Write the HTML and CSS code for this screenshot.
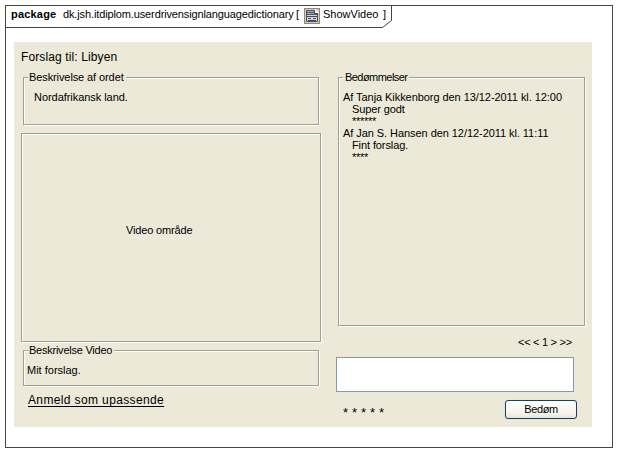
FILE: index.html
```html
<!DOCTYPE html>
<html lang="da">
<head>
<meta charset="utf-8">
<title>ShowVideo</title>
<link rel="stylesheet" href="styles.css">
</head>
<body>
<main class="frame">
  <header class="tab">
    <svg class="tab-edge" width="387" height="23" viewBox="0 0 387 23" aria-hidden="true"><path d="M0 21.500H377.500L386.500 14.500V0" fill="none" stroke="#444"/></svg>
    <b class="package">package</b>
    <span class="path">dk.jsh.itdiplom.userdrivensignlanguagedictionary</span>
    <span class="bracket">[</span>
    <svg class="icon" width="16" height="16" viewBox="0 0 16 16" aria-hidden="true">
      <rect x=".5" y=".5" width="15" height="15" fill="#d5cdc5" stroke="#91857d"/>
      <path d="M2 2H11L14 5V14H2Z" fill="#4d535e"/>
      <path d="M11 1V5H15Z" fill="#fff"/>
      <path d="M3 3.500H10M3 5.500H10" stroke="#a9afb9"/>
      <path d="M3 7H13V13H3Z" fill="#d3d6dc"/>
      <path d="M3 8.500H13M4 10.500H7M9 10.500H12M4 12.500H12" stroke="#454950"/>
    </svg>
    <span class="name">ShowVideo</span>
    <span class="bracket">]</span>
  </header>
  <section class="panel">
    <h1 class="title">Forslag til: Libyen</h1>
    <div class="columns">
      <div class="left">
        <section class="group word"><h2 class="legend">Beskrivelse af ordet</h2><p class="word-text">Nordafrikansk land.</p></section>
        <section class="group video"><span class="video-text">Video område</span></section>
        <section class="group about"><h2 class="legend about-legend">Beskrivelse Video</h2><p class="about-text">Mit forslag.</p></section>
        <a class="report">Anmeld som upassende</a>
      </div>
      <div class="right">
        <section class="group reviews">
          <h2 class="legend reviews-legend">Bedømmelser</h2>
          <article class="review"><p class="author">Af Tanja Kikkenborg den 13/12-2011 kl. 12:00</p><p class="comment">Super godt</p><p class="comment stars">******</p></article>
          <article class="review"><p class="author">Af Jan S. Hansen den 12/12-2011 kl. 11:11</p><p class="comment">Fint forslag.</p><p class="comment stars">****</p></article>
        </section>
        <nav class="pager">&lt;&lt; &lt; 1 &gt; &gt;&gt;</nav>
        <div class="input"></div>
        <div class="actions"><span class="rating">*****</span><button class="button">Bedøm</button></div>
      </div>
    </div>
  </section>
</main>
</body>
</html>
```
FILE: styles.css
```css
* { box-sizing: border-box; }
body { margin: 0; padding: 5px; background: #fff; color: #000; font: 11px/12px "Liberation Sans", Arial, sans-serif; }
h1, h2, p { margin: 0; font-size: inherit; font-weight: normal; }
span, p, h1, h2, a, b, nav { white-space: nowrap; }
.frame { width: 608px; height: 443px; border: 1px solid #444; }
.tab { position: relative; display: flex; width: 386px; height: 22px; padding: 2px 0 0 5px; }
.tab > span, .tab > b { line-height: 13px; }
.tab-edge { position: absolute; left: -1px; top: 0; }
.package { width: 52px; letter-spacing: .2px; }
.path { width: 233px; letter-spacing: -.125px; }
.bracket { width: 8px; }
.icon { flex: none; }
.name { width: 60px; margin-left: 3px; }
.panel { width: 578px; height: 385px; margin: 14px 0 0 8px; padding: 8px 0 0 7px; background: #ece9d8; }
.title { height: 27px; font-size: 12px; line-height: 14px; letter-spacing: .12px; }
.columns { display: flex; }
.left { width: 315px; }
.right { width: 250px; }
.group { border: 1px solid #a09f93; box-shadow: 1px 1px 0 #fff, inset 1px 1px 0 #fff; }
.legend { width: max-content; height: 12px; margin: -7px 0 0 4px; padding: 0 2px 0 1px; background: #ece9d8; letter-spacing: -.1px; }
.word { width: 296px; height: 48px; margin-left: 2px; }
.word-text { margin: 8px 0 0 10px; letter-spacing: -.05px; }
.video { display: flex; align-items: center; width: 300px; height: 209px; margin-top: 8px; padding: 0 0 15px 104px; }
.video-text { letter-spacing: -.15px; }
.about { width: 296px; height: 36px; margin: 8px 0 0 2px; }
.about-legend { letter-spacing: -.24px; }
.about-text { margin: 8px 0 0 3px; }
.report { display: block; width: max-content; margin: 7px 0 0 7px; font-size: 12px; line-height: 14px; letter-spacing: .37px; text-decoration: underline; text-underline-offset: 2px; }
.reviews { width: 247px; height: 249px; margin-left: 2px; }
.reviews .legend { margin-bottom: 8px; }
.reviews-legend { padding-left: 2px; letter-spacing: -.55px; }
.review { margin-left: 4px; }
.author { letter-spacing: -.06px; }
.comment { margin-left: 9px; letter-spacing: -.1px; }
.stars { letter-spacing: -.28px; }
.pager { margin: 10px 0 0 182px; line-height: 12px; letter-spacing: -.28px; }
.input { width: 238px; height: 35px; margin-top: 9px; border: 1px solid #829aa9; background: #fff; }
.actions { display: flex; height: 19px; margin-top: 8px; }
.rating { width: 169px; padding: 7px 0 0 7px; font-size: 13px; letter-spacing: 3.940px; }
.button { width: 72px; height: 19px; padding: 0 0 2px; border: 1px solid #163f65; border-radius: 3px; background: linear-gradient(#fff, #f5f4ed 70%, #e6e3d8); box-shadow: 0 0 1px #bacbd2; color: #000; font: inherit; letter-spacing: -.4px; }
```
